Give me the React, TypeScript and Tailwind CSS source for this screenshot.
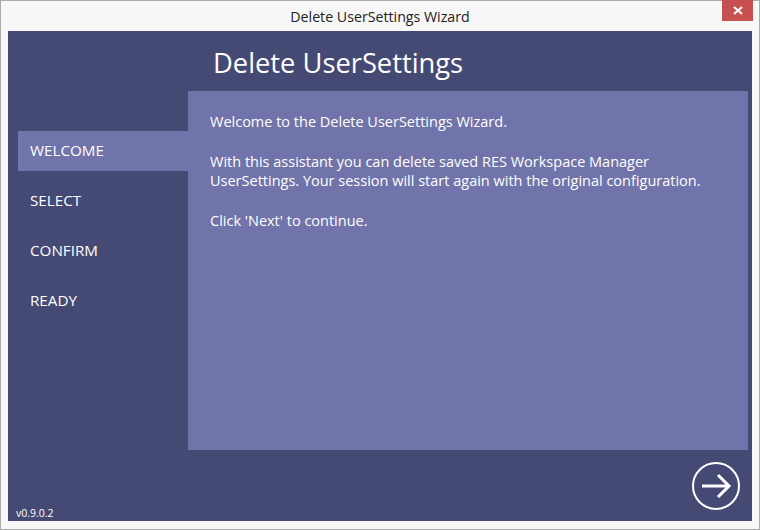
import React from 'react';

const steps = ['WELCOME', 'SELECT', 'CONFIRM', 'READY'];

const App: React.FC = () => {
  return (
    <div
      className="w-[760px] h-[530px] bg-[#f7f7f7] border border-[#acacac] flex flex-col"
      style={{ fontFamily: '"Open Sans", "Noto Sans", sans-serif' }}
    >
      {/* title bar */}
      <div className="h-[30px] shrink-0 flex items-start relative">
        <div className="flex-1 text-center text-[14.2px] text-[#222] pt-[5px]">Delete UserSettings Wizard</div>
        <div className="absolute right-[6px] top-[-1px] w-[31px] h-[21px] bg-[#c75050] flex items-center justify-center">
          <svg width="10" height="9" viewBox="0 0 10 9">
            <path d="M1 1 L9 8 M9 1 L1 8" stroke="white" strokeWidth="2" />
          </svg>
        </div>
      </div>

      {/* wizard panel */}
      <div className="mx-[7px] h-[490px] bg-[#454a75] flex flex-col text-white">
        <div className="h-[60px] shrink-0 pl-[205px] pt-[15px] text-[27.3px] leading-[34px]">Delete UserSettings</div>

        <div className="flex h-[359px]">
          <div className="w-[180px] pl-[10px] pt-[40px] flex flex-col gap-[10px]">
            {steps.map((s, i) => (
              <div
                key={s}
                className={`h-[40px] flex items-center pl-[12px] pb-[2px] text-[15.2px] ${i === 0 ? 'bg-[#7074aa]' : ''}`}
              >
                {s}
              </div>
            ))}
          </div>
          <div className="w-[560px] bg-[#7074aa] pl-[22px] pt-[21px] text-[14.5px] leading-[19px]">
            <p>Welcome to the Delete UserSettings Wizard.</p>
            <p className="mt-[21px]">
              With this assistant you can delete saved RES Workspace Manager
              <br />
              UserSettings. Your session will start again with the original configuration.
            </p>
            <p className="mt-[21px]">Click 'Next' to continue.</p>
          </div>
        </div>

        <div className="flex-1 flex items-end justify-between pl-[8px] pr-[11px] pb-[10px]">
          <div className="text-[10.5px] leading-[12px] mb-[-8px]">v0.9.0.2</div>
          <svg width="50" height="50" viewBox="0 0 50 50">
            <circle cx="25" cy="25" r="23" fill="none" stroke="white" strokeWidth="2" />
            <path d="M11 25 H38 M27 14 L38 25 L27 36" fill="none" stroke="white" strokeWidth="3" />
          </svg>
        </div>
      </div>
    </div>
  );
};

export default App;
